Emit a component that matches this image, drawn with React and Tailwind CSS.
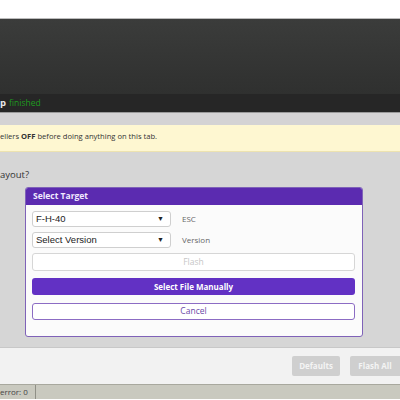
import React from "react";

const font = { fontFamily: '"Open Sans", "Liberation Sans", sans-serif' };

const Select = ({ value }) => (
  <div className="flex h-[16px] w-[139px] items-center justify-between rounded-[3px] border border-[#cfcfcf] bg-white pl-[3px] pr-[6px] text-[9.5px] text-[#222] [font-family:'Liberation_Sans',sans-serif]">
    <span>{value}</span>
    <span className="text-[7px]">▼</span>
  </div>
);

const App = () => {
  return (
    <div className="relative h-[400px] w-[400px] overflow-hidden bg-white" style={font}>
      <div className="h-[18px] bg-white" />
      {/* Log panel */}
      <div className="border-t border-[#bcbcbc] bg-gradient-to-b from-[#3b3c3b] to-[#2f302f] h-[76px]" />
      <div className="flex h-[18px] items-center bg-[#262626] text-[8.5px]">
        <span className="font-bold text-[#e8e8e8] text-[9.5px]">p</span>
        <span className="ml-[3px] text-[#1f9a1f]">finished</span>
      </div>
      <div className="h-[13px] border-t border-[#9a9a9a] bg-[#d4d3d4]" />
      {/* Warning note */}
      <div className="flex h-[27px] items-center border-b border-[#ede3b0] bg-[#fef7d1] pb-[2px] text-[7.6px] text-[#333]">
        <span>
          ellers <b>OFF</b> before doing anything on this tab.
        </span>
      </div>
      {/* Content */}
      <div className="h-[195px] bg-[#d6d6d6] pt-[16px]">
        <div className="text-[9.5px] text-[#333] leading-[14px]">ayout?</div>
        <div className="ml-[25px] mt-[5px] w-[338px] overflow-hidden rounded-[3px] border border-[#7f62b8] bg-[#fbfbfb]">
          <div className="flex h-[17px] items-center bg-[#5b2bb0] pl-[7px] text-[8.5px] font-bold text-[#f0eaff]">
            Select Target
          </div>
          <div className="flex flex-col px-[6px] pb-[16px] pt-[6px]">
            <div className="flex items-center">
              <Select value="F-H-40" />
              <span className="ml-[11px] text-[8px] text-[#666]">ESC</span>
            </div>
            <div className="mt-[5px] flex items-center">
              <Select value="Select Version" />
              <span className="ml-[11px] text-[8px] text-[#666]">Version</span>
            </div>
            <div className="mt-[5px] flex h-[18px] w-[323px] items-center justify-center rounded-[3px] border border-[#d6d6d6] bg-white text-[8.5px] text-[#c6c6c6]">
              Flash
            </div>
            <div className="mt-[7px] flex h-[17px] w-[323px] items-center justify-center rounded-[3px] bg-[#6231c4] text-[8px] font-bold text-white">
              Select File Manually
            </div>
            <div className="mt-[8px] flex h-[17px] w-[323px] items-center justify-center rounded-[3px] border border-[#8c6cc4] bg-white text-[8.5px] text-[#6b4aa8]">
              Cancel
            </div>
          </div>
        </div>
      </div>
      {/* Toolbar */}
      <div className="flex h-[37px] items-center justify-end gap-[10px] border-t border-[#c8c8c8] bg-[#f2f2f2] pr-0">
        <div className="flex h-[20px] w-[48px] items-center justify-center rounded-[2px] bg-[#cfcfcf] text-[8px] font-bold text-[#f4f4f4]">
          Defaults
        </div>
        <div className="flex h-[20px] w-[50px] items-center justify-center rounded-l-[2px] bg-[#cfcfcf] text-[8px] font-bold text-[#f4f4f4]">
          Flash All
        </div>
      </div>
      {/* Status bar */}
      <div className="flex h-[15px] items-center border-t border-[#a8a89e] bg-[#c9c9bf] text-[8px] text-[#444]">
        <span className="pr-[7px]">error: 0</span>
        <span className="h-full border-l border-[#8f8f86]" />
      </div>
    </div>
  );
};

export default App;
